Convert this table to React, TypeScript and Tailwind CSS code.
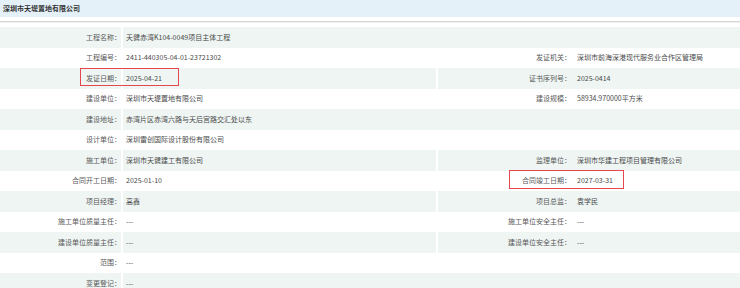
import React from 'react';

type Row = {
    label: string;
    value: string;
    label2?: string;
    value2?: string;
};

const rows: Row[] = [
    { label: '工程名称：', value: '天健赤湾K104-0049项目主体工程' },
    {
        label: '工程编号：',
        value: '2411-440305-04-01-23721302',
        label2: '发证机关：',
        value2: '深圳市前海深港现代服务业合作区管理局',
    },
    { label: '发证日期：', value: '2025-04-21', label2: '证书序列号：', value2: '2025-0414' },
    { label: '建设单位：', value: '深圳市天堤置地有限公司', label2: '建设规模：', value2: '58934.970000平方米' },
    { label: '建设地址：', value: '赤湾片区赤湾六路与天后宫路交汇处以东' },
    { label: '设计单位：', value: '深圳雷创国际设计股份有限公司' },
    { label: '施工单位：', value: '深圳市天健建工有限公司', label2: '监理单位：', value2: '深圳市华建工程项目管理有限公司' },
    { label: '合同开工日期：', value: '2025-01-10', label2: '合同竣工日期：', value2: '2027-03-31' },
    { label: '项目经理：', value: '高鑫', label2: '项目总监：', value2: '袁学民' },
    { label: '施工单位质量主任：', value: '---', label2: '施工单位安全主任：', value2: '---' },
    { label: '建设单位质量主任：', value: '---', label2: '建设单位安全主任：', value2: '---' },
    { label: '范围：', value: '---' },
    { label: '变更登记：', value: '---' },
];

export default function App() {
    return (
        <div
            className="relative w-[740px] h-[288px] overflow-hidden bg-white text-[7px] leading-none"
            style={{ fontFamily: '"Noto Sans CJK SC", "Noto Sans", sans-serif' }}
        >
            <div className="h-[17px] bg-[#e4f1f9] flex items-center pl-[3px] font-bold text-[#333]">
                深圳市天堤置地有限公司
            </div>
            <div className="h-[4px]" />
            <div className="h-[1px] bg-[#d6d6d6]" />
            <div className="h-[5px] border-t border-[#f0f0f0]" />
            <div className="flex flex-col">
                {rows.map((row, index) => {
                    const shaded = index % 2 === 0 ? 'bg-[#eef5f3]' : 'bg-white';
                    return (
                        <div
                            key={index}
                            className="grid grid-cols-[121px_313px_1fr] gap-x-[2px] h-[20.5px]"
                        >
                            <div className={`${shaded} flex items-center justify-end text-[#5a5a5a]`}>
                                {row.label}
                            </div>
                            {row.label2 ? (
                                <>
                                    <div className={`${shaded} flex items-center pl-[3px] text-[#4a4a4a]`}>
                                        {row.value}
                                    </div>
                                    <div className={`${shaded} flex items-center`}>
                                        <div className="w-[133px] text-right text-[#5a5a5a]">
                                            {row.label2}
                                        </div>
                                        <div className="pl-[6px] text-[#4a4a4a]">{row.value2}</div>
                                    </div>
                                </>
                            ) : (
                                <div className={`${shaded} col-span-2 flex items-center pl-[3px] text-[#4a4a4a]`}>
                                    {row.value}
                                </div>
                            )}
                        </div>
                    );
                })}
            </div>
            {/* annotation boxes */}
            <div className="absolute left-[80px] top-[68px] w-[99px] h-[18px] border-[1.5px] border-[#e6474e]" />
            <div className="absolute left-[509px] top-[170px] w-[115px] h-[19px] border-[1.5px] border-[#e6474e]" />
        </div>
    );
}
